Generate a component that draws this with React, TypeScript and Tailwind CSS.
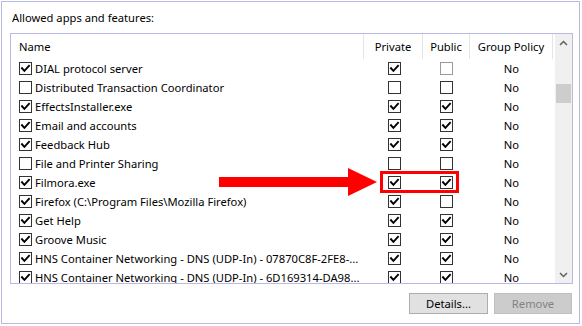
import React from "react";

type Row = { name: string; on: boolean; priv: boolean; pub: boolean; pubDisabled?: boolean };

const rows: Row[] = [
  { name: "DIAL protocol server", on: true, priv: true, pub: false, pubDisabled: true },
  { name: "Distributed Transaction Coordinator", on: false, priv: false, pub: false },
  { name: "EffectsInstaller.exe", on: true, priv: true, pub: true },
  { name: "Email and accounts", on: true, priv: true, pub: true },
  { name: "Feedback Hub", on: true, priv: true, pub: true },
  { name: "File and Printer Sharing", on: false, priv: false, pub: false },
  { name: "Filmora.exe", on: true, priv: true, pub: true },
  { name: "Firefox (C:\\Program Files\\Mozilla Firefox)", on: true, priv: true, pub: false },
  { name: "Get Help", on: true, priv: true, pub: true },
  { name: "Groove Music", on: true, priv: true, pub: true },
  { name: "HNS Container Networking - DNS (UDP-In) - 07870C8F-2FE8-...", on: true, priv: true, pub: true },
  { name: "HNS Container Networking - DNS (UDP-In) - 6D169314-DA98...", on: true, priv: true, pub: true },
];

const Check = ({ checked, disabled }: { checked: boolean; disabled?: boolean }) => (
  <svg width="13" height="13" viewBox="0 0 13 13" className="shrink-0">
    <rect x="0.5" y="0.5" width="12" height="12" fill="#fff" stroke={disabled ? "#9a9a9a" : "#333"} />
    {checked && (
      <path d="M3 6.2 L5.4 8.8 L10 3.8" fill="none" stroke="#000" strokeWidth="1.9" strokeLinecap="square" />
    )}
  </svg>
);

const Chevron = ({ up }: { up?: boolean }) => (
  <svg width="9" height="6" viewBox="0 0 9 6">
    <path d={up ? "M1 5 L4.5 1.5 L8 5" : "M1 1 L4.5 4.5 L8 1"} fill="none" stroke="#606060" strokeWidth="1.5" />
  </svg>
);

export default function App() {
  return (
    <div className="relative w-[582px] h-[326px] bg-white text-[11.2px] text-black font-['Noto_Sans',sans-serif] overflow-hidden">
      <div className="ml-[1px] mt-[1px] w-[579px] h-[323px] border border-[#b9b9e4]">
        <div className="pl-[10px] mt-[8px] h-[16px] leading-[16px]">Allowed apps and features:</div>
        <div className="ml-[8px] mt-[7px] w-[563px] h-[251px] border border-[#b9b9e4] flex overflow-hidden">
          <div className="flex-1 flex flex-col">
            <div className="h-[25px] shrink-0 flex items-center leading-[16px]">
              <div className="w-[353px] pl-[8px] border-r border-[#e5e5e5] h-full flex items-center">Name</div>
              <div className="w-[59px] border-r border-[#e5e5e5] h-full flex items-center justify-center">Private</div>
              <div className="w-[47px] border-r border-[#e5e5e5] h-full flex items-center justify-center">Public</div>
              <div className="w-[83px] border-r border-[#e5e5e5] h-full flex items-center justify-center">Group Policy</div>
            </div>
            {rows.map((r) => (
              <div key={r.name} className="h-[19px] shrink-0 flex items-center leading-[16px]">
                <div className="w-[353px] pl-[8px] flex items-center gap-[3px] whitespace-nowrap overflow-hidden">
                  <Check checked={r.on} />
                  <span>{r.name}</span>
                </div>
                <div className="w-[59px] flex justify-center pl-[1px]">
                  <Check checked={r.priv} />
                </div>
                <div className="w-[47px] flex justify-center">
                  <Check checked={r.pub} disabled={r.pubDisabled} />
                </div>
                <div className="w-[83px] text-center">No</div>
              </div>
            ))}
          </div>
          <div className="w-[17px] ml-[1px] bg-[#f0f0f0] flex flex-col">
            <div className="h-[17px] flex items-center justify-center">
              <Chevron up />
            </div>
            <div className="mt-[33px] mx-[1px] h-[19px] bg-[#cdcdcd]" />
            <div className="flex-1" />
            <div className="h-[17px] flex items-center justify-center">
              <Chevron />
            </div>
          </div>
        </div>
        <div className="mt-[9px] mr-[7px] flex justify-end gap-[6px]">
          <button className="w-[79px] h-[21px] bg-[#e1e1e1] border border-[#adadad] leading-[16px]">Details...</button>
          <button className="w-[78px] h-[21px] bg-[#cccccc] border border-[#bfbfbf] text-[#838383] leading-[16px]">Remove</button>
        </div>
      </div>

      <div className="absolute left-[380px] top-[171px] w-[79px] h-[22px] border-[3px] border-[#ff0000]" />
      <svg className="absolute left-[218px] top-[167px]" width="160" height="30" viewBox="0 0 160 30">
        <rect x="1" y="10" width="130" height="10" fill="#ff0000" />
        <polygon points="130,1 159,15 130,29" fill="#ff0000" />
      </svg>
    </div>
  );
}
